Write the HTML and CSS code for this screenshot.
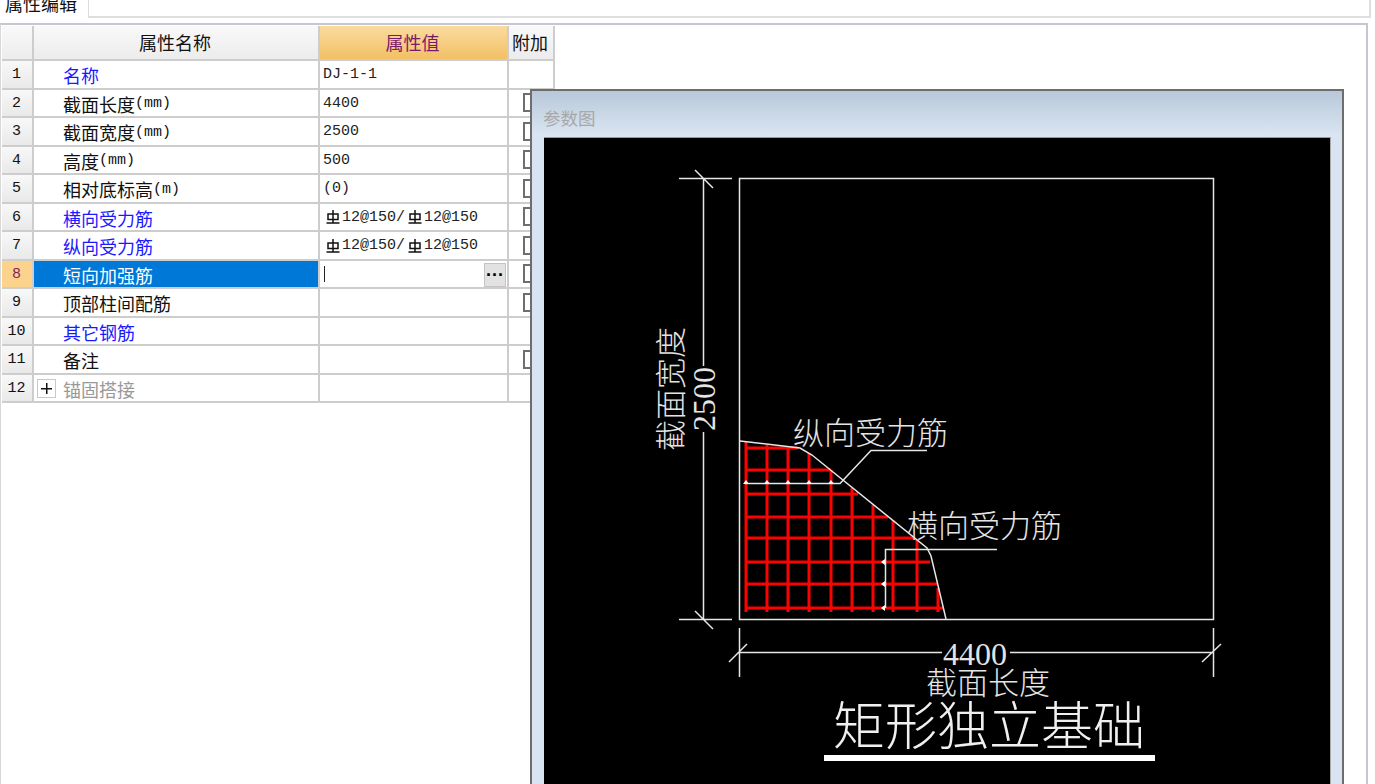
FILE: index.html
```html
<!DOCTYPE html>
<html lang="zh">
<head>
<meta charset="utf-8">
<title>属性编辑</title>
<link rel="stylesheet" href="styles.css">
</head>
<body>
<svg class="defs" width="0" height="0" aria-hidden="true">
  <symbol id="rebar" viewBox="0 0 14 14">
    <path d="M7 0V13.5M0.5 13H13.5M2 4H12V9.5H2Z" fill="none" stroke="#111" stroke-width="1.5"/>
  </symbol>
</svg>
<div class="tabbar">
  <div class="tab"><span class="tab-label">属性编辑</span></div>
  <div class="tab-rest"></div>
</div>
<main class="panel">
  <div class="grid">
    <div class="cell head corner"></div>
    <div class="cell head">属性名称</div>
    <div class="cell head head-active">属性值</div>
    <div class="cell head">附加</div>

    <div class="cell num">1</div>
    <div class="cell name blue">名称</div>
    <div class="cell val">DJ-1-1</div>
    <div class="cell extra"></div>

    <div class="cell num">2</div>
    <div class="cell name">截面长度<span class="unit">(mm)</span></div>
    <div class="cell val">4400</div>
    <div class="cell extra"><i class="check"></i></div>

    <div class="cell num">3</div>
    <div class="cell name">截面宽度<span class="unit">(mm)</span></div>
    <div class="cell val">2500</div>
    <div class="cell extra"><i class="check"></i></div>

    <div class="cell num">4</div>
    <div class="cell name">高度<span class="unit">(mm)</span></div>
    <div class="cell val">500</div>
    <div class="cell extra"><i class="check"></i></div>

    <div class="cell num">5</div>
    <div class="cell name">相对底标高<span class="unit">(m)</span></div>
    <div class="cell val">(0)</div>
    <div class="cell extra"><i class="check"></i></div>

    <div class="cell num">6</div>
    <div class="cell name blue">横向受力筋</div>
    <div class="cell val"><svg class="bar"><use href="#rebar"/></svg>12@150/<svg class="bar"><use href="#rebar"/></svg>12@150</div>
    <div class="cell extra"><i class="check"></i></div>

    <div class="cell num">7</div>
    <div class="cell name blue">纵向受力筋</div>
    <div class="cell val"><svg class="bar"><use href="#rebar"/></svg>12@150/<svg class="bar"><use href="#rebar"/></svg>12@150</div>
    <div class="cell extra"><i class="check"></i></div>

    <div class="cell num num-active">8</div>
    <div class="cell name selected">短向加强筋</div>
    <div class="cell val editing"><i class="caret"></i><button class="more" type="button">···</button></div>
    <div class="cell extra"><i class="check"></i></div>

    <div class="cell num">9</div>
    <div class="cell name">顶部柱间配筋</div>
    <div class="cell val"></div>
    <div class="cell extra"><i class="check"></i></div>

    <div class="cell num">10</div>
    <div class="cell name blue">其它钢筋</div>
    <div class="cell val"></div>
    <div class="cell extra"></div>

    <div class="cell num">11</div>
    <div class="cell name">备注</div>
    <div class="cell val"></div>
    <div class="cell extra"><i class="check"></i></div>

    <div class="cell num">12</div>
    <div class="cell name group"><i class="plus"></i>锚固搭接</div>
    <div class="cell val"></div>
    <div class="cell extra"></div>
  </div>

  <section class="dialog">
    <div class="dialog-title">参数图</div>
    <div class="canvas">
      <svg class="drawing" viewBox="544 137 786 647" width="786" height="647">
        <g class="red">
          <path d="M746 441V612M767 445V612M788 448V612M809 453V612M831 470V612M852 488V612M873 505V612M893 520V612M917 540V612M938 588V612"/>
          <path d="M746 448H798M746 470H831M746 494H858M746 517H888M746 538H913M746 562H930M746 584H937M746 608H943"/>
        </g>
        <g class="line">
          <rect x="739.5" y="178.5" width="474" height="441"/>
          <path d="M679 178.5H732M679 619.5H732M703.5 178V366M703.5 432V619M695 170L713 188M695 611L713 629"/>
          <path d="M739.5 628V677M1213.5 628V677M739 652.5H942M1010 652.5H1213M729 662L747 644M1202 662L1221 644"/>
          <path d="M740 441L800 448L812 455L927 548L931 556L946 619"/>
          <path d="M745 483.5H840L871 450.5H927"/>
          <path d="M997 549.5H885.5V608"/>
        </g>
        <g class="dots">
          <path d="M746 480L749 484H743ZM767 480L770 484H764ZM788 480L791 484H785ZM809 480L812 484H806ZM831 480L834 484H828Z"/>
          <path d="M881 562L885 559V565ZM881 584L885 581V587ZM881 608L885 605V611Z"/>
        </g>
        <text class="cad" x="793" y="444">纵向受力筋</text>
        <text class="cad" x="907" y="537">横向受力筋</text>
        <text class="cad" x="926" y="694">截面长度</text>
        <text class="cad num-text" x="943" y="665">4400</text>
        <text class="cad" transform="translate(682 451) rotate(-90)">截面宽度</text>
        <text class="cad num-text" transform="translate(715 431) rotate(-90)">2500</text>
        <text class="cad cad-title" x="833" y="745">矩形独立基础</text>
        <rect class="rule" x="824" y="755" width="331" height="6"/>
      </svg>
    </div>
  </section>
</main>
</body>
</html>
```

FILE: styles.css
```css
html, body {
  margin: 0;
  height: 784px;
  overflow: hidden;
  background: #fff;
}
body {
  font-family: "Noto Sans CJK SC", "Liberation Sans", sans-serif;
  font-size: 18px;
  color: #111;
}
.defs { position: absolute; }

.tabbar {
  display: flex;
  height: 18px;
  width: 1371px;
}
.tab {
  width: 89px;
  height: 18px;
  overflow: hidden;
  border-right: 1px solid #dcdcdc;
  box-sizing: border-box;
}
.tab-label {
  display: block;
  margin: -9px 0 0 5px;
  line-height: 24px;
}
.tab-rest {
  flex: 1;
  height: 18px;
  box-sizing: border-box;
  border-bottom: 2px solid #dedede;
  border-right: 2px solid #dedede;
}

.panel {
  position: relative;
  margin-top: 5px;
  width: 1368px;
  height: 761px;
  box-sizing: border-box;
  border-top: 2px solid #c6c6ce;
  border-right: 2px solid #c6c6ce;
  border-left: 1px solid #d8d8d8;
  padding: 1px 0 0 1px;
}

.grid {
  display: grid;
  grid-template-columns: 32px 286px 189px 46px;
  grid-template-rows: 35px repeat(12, 28.5px);
  width: 553px;
}
.cell {
  box-sizing: border-box;
  display: flex;
  align-items: center;
  border-right: 2px solid #cdcdcd;
  border-bottom: 2px solid #cdcdcd;
  white-space: nowrap;
  overflow: hidden;
}
.head {
  justify-content: center;
  padding-right: 2px;
  padding-bottom: 2px;
  background: linear-gradient(#f9f9f9, #ececec);
}
.head-active {
  background: linear-gradient(#fadb9f, #f2c065);
  color: #7a1a6c;
}
.num {
  justify-content: center;
  padding: 1px 1px 0 0;
  font-family: "Liberation Mono", monospace;
  font-size: 15px;
  background: linear-gradient(#f8f8f8, #e9e9e9);
}
.num-active {
  background: #fcd38c;
  color: #8a1f5e;
}
.name { padding-left: 29px; line-height: 1; padding-top: 2px; }
.blue { color: #1a1aff; }
.selected { background: #0078d7; color: #fff; }
.group { padding-left: 3px; color: #999; }
.unit { font-family: "Liberation Mono", monospace; font-size: 15px; }
.val {
  padding: 1px 0 0 3px;
  font-family: "Liberation Mono", monospace;
  font-size: 15px;
  color: #222;
}
.bar {
  width: 14px;
  height: 14px;
  margin: 0 2px 0 3px;
  flex: none;
}
.editing { position: relative; }
.caret {
  width: 1px;
  height: 16px;
  background: #222;
  margin-left: 1px;
}
.more {
  position: absolute;
  right: 1px;
  top: 2px;
  width: 22px;
  height: 24px;
  padding: 0;
  border: 1px solid #c4c4c4;
  background: #e2e2e2;
  font: bold 18px/20px "Liberation Sans", sans-serif;
  color: #000;
}
.check {
  display: block;
  box-sizing: border-box;
  width: 16px;
  height: 19px;
  margin-left: 14px;
  border: 2px solid #6e6e6e;
  background: #fff;
}
.plus {
  position: relative;
  flex: none;
  box-sizing: border-box;
  width: 19px;
  height: 19px;
  margin-right: 7px;
  border: 1px solid #c8c8c8;
  background:
    linear-gradient(#111, #111) center / 11px 1.5px no-repeat,
    linear-gradient(#111, #111) center / 1.5px 11px no-repeat,
    #fff;
}

.dialog {
  position: absolute;
  left: 529px;
  top: 64px;
  width: 814px;
  height: 720px;
  box-sizing: border-box;
  border: 2px solid #6d6d6d;
  border-bottom: 0;
  background: #d8e4f2;
  padding: 0 11px 0 12px;
}
.dialog-title {
  height: 46px;
  margin: 0 -11px 0 -12px;
  padding: 18px 0 0 11px;
  box-sizing: border-box;
  line-height: 18px;
  font-size: 17.5px;
  color: #a8a8a8;
  background: linear-gradient(#b8c8d9, #dbe6f3);
}
.canvas {
  width: 787px;
  height: 650px;
  box-sizing: border-box;
  background: #000;
  border-top: 1px solid #9a9a9a;
  border-right: 1px solid #a8a8a8;
  overflow: hidden;
}
.drawing { display: block; margin-top: -1px; }
.red { fill: none; stroke: #f00; stroke-width: 3; }
.line { fill: none; stroke: #e6e6e6; stroke-width: 1.5; }
.dots { fill: #fff; }
.rule { fill: #fff; }
.cad {
  fill: #e4e4e4;
  font-family: "Noto Sans CJK SC", sans-serif;
  font-weight: 300;
  font-size: 31px;
}
.num-text {
  font-family: "Liberation Serif", serif;
  font-weight: 400;
  font-size: 32px;
}
.cad-title { font-size: 52px; fill: #f0f0f0; }
```
